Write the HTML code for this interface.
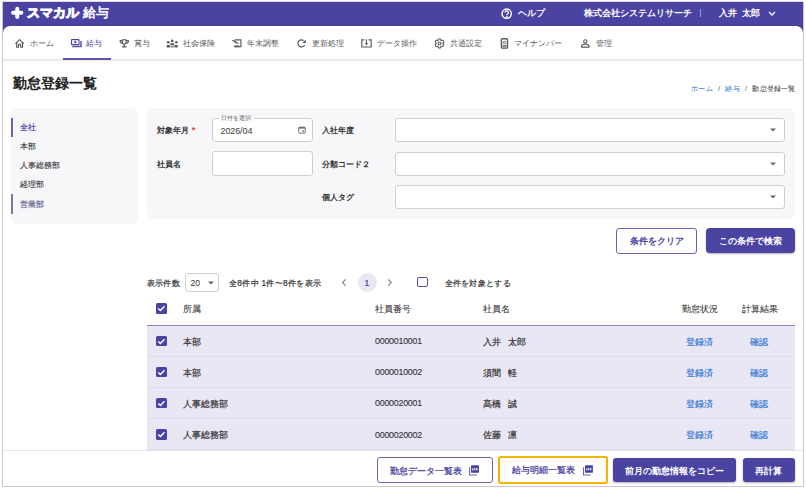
<!DOCTYPE html>
<html lang="ja">
<head>
<meta charset="utf-8">
<style>
*{box-sizing:border-box;margin:0;padding:0}
html,body{width:806px;height:489px;overflow:hidden;background:#fff}
body{font-family:"Liberation Sans",sans-serif;color:#333;position:relative;-webkit-text-stroke-width:.2px}
.a{position:absolute;white-space:nowrap;line-height:1}
#wrap{position:absolute;left:0;top:0;width:806px;height:489px;clip-path:inset(2px 3px 3px 3px)}
#frame{position:absolute;left:2px;top:1px;width:802px;height:486px;border:1px solid #c9c9c9;border-top-color:#dedcd6}
#hdr{position:absolute;left:3px;top:2px;width:800px;height:34px;background:#4a43a2}
#main{position:absolute;left:3px;top:26px;width:800px;height:470px;background:#fff;border-radius:7px 7px 0 0}
.w{color:#fff;font-weight:bold;-webkit-text-stroke-width:0}
.nav{font-size:8.4px;color:#5a5a5a;-webkit-text-stroke-width:0}
.navact{color:#4a43a2}
svg{position:absolute;overflow:visible}
.panel{position:absolute;background:#f7f7fa;border-radius:7px}
.lbl{font-size:8.25px;font-weight:bold;color:#333;-webkit-text-stroke-width:0}
.inp{position:absolute;background:#fff;border:1px solid #cfcfcf;border-radius:3px}
.btn{position:absolute;border-radius:3px;font-weight:bold;font-size:9px;text-align:center;-webkit-text-stroke-width:0}
.tx{font-size:8.6px;color:#333}
.row{position:absolute;left:144px;width:648px;height:31px;background:#e9e7f4;border-bottom:1px solid #dfdde9}
.cb{position:absolute;width:10.6px;height:10.6px;background:#4a43a2;border-radius:1.5px}
.link{color:#3c7dd6;font-size:8.6px}
</style>
</head>
<body>
<div id="wrap">
  <div id="hdr"></div>
  <div id="main"></div>
  <!-- logo -->
  <svg style="left:0;top:0" width="30" height="26" viewBox="0 0 30 26"><path d="M17.25 8.7V16.9M13.1 12.8H21.4" stroke="#fff" stroke-width="4" stroke-linecap="round"/></svg>
  <div class="a w" style="left:26.5px;top:6.8px;font-size:12.6px;font-weight:900;letter-spacing:.3px;-webkit-text-stroke:1px #fff">スマカル</div>
  <div class="a w" style="left:82.5px;top:7px;font-size:12.5px;font-weight:normal;-webkit-text-stroke:.55px #fff">給与</div>
  <!-- header right -->
  <svg style="left:501px;top:7.5px" width="12" height="12" viewBox="0 0 12 12"><circle cx="5.7" cy="5.7" r="4.6" fill="none" stroke="#fff" stroke-width="1.5"/><path d="M4.1 4.6a1.65 1.65 0 1 1 2.5 1.4c-.65.4-.9.7-.9 1.3" fill="none" stroke="#fff" stroke-width="1.3"/><circle cx="5.7" cy="8.6" r=".8" fill="#fff"/></svg>
  <div class="a w" style="left:518px;top:9px;font-size:8.5px">ヘルプ</div>
  <div class="a w" style="left:584px;top:9px;font-size:8.9px">株式会社システムリサーチ</div>
  <div class="a" style="left:700px;top:9px;width:1px;height:8px;background:#9f9acb"></div>
  <div class="a w" style="left:719px;top:9px;font-size:8.9px">入井&nbsp;&nbsp;太郎</div>
  <svg style="left:768px;top:11px" width="8" height="5" viewBox="0 0 8 5"><path d="M1 1l3 3 3-3" fill="none" stroke="#fff" stroke-width="1.3"/></svg>

  <!-- nav -->
  <div class="a" style="left:3px;top:59px;width:800px;height:2px;background:#ebebeb"></div>
  <div class="a" style="left:63px;top:58px;width:48px;height:2px;background:#5e57b0"></div>
  <svg id="navicons" style="left:0;top:0" width="806" height="60" viewBox="0 0 806 60">
<g fill="none" stroke="#5a5a5a" stroke-width="1.15" stroke-linejoin="round" stroke-linecap="round">
<path d="M15.7 43.3L19.6 39.6 23.5 43.3"/>
<path d="M16.7 42.6V47.2H18.5V45.2A1.1 1.1 0 0 1 20.7 45.2V47.2H22.5V42.6"/>
</g>
<g>
<rect x="71.4" y="39.6" width="7.6" height="5" rx=".7" fill="none" stroke="#4a43a2" stroke-width="1.1"/>
<circle cx="75.2" cy="42.1" r="1.2" fill="#4a43a2"/>
<path d="M72.2 46.5H81V41" fill="none" stroke="#5a54b0" stroke-width="1.5"/>
</g>
<g fill="none" stroke="#5a5a5a" stroke-width="1.15">
<path d="M122.5 39.7H126V42.4A1.75 1.75 0 0 1 122.5 42.4Z"/>
<path d="M122.5 40.6H120.2V41.4A1.9 1.9 0 0 0 122.4 43.2M126 40.6H128.3V41.4A1.9 1.9 0 0 1 126.1 43.2"/>
<path d="M124.25 44.2V46.6M122 46.9H126.5" stroke-width="1.2"/>
</g>
<g fill="#5a5a5a">
<circle cx="172.2" cy="40.9" r="1.35"/>
<circle cx="168.2" cy="42.3" r="1.3"/>
<circle cx="176.3" cy="42.3" r="1.3"/>
<rect x="170.3" y="43.3" width="3.9" height="1.7" rx=".3"/>
<rect x="166.6" y="44.9" width="3.3" height="2.6" rx=".4"/>
<rect x="174.5" y="44.9" width="3.3" height="2.6" rx=".4"/>
<rect x="170.5" y="45.6" width="3.5" height="1.9" fill="#8a8a8a"/>
</g>
<g fill="none" stroke="#5a5a5a" stroke-width="1.15">
<path d="M234.8 39.9H240.9V46.6H234.6"/>
<path d="M232.3 40.6L234.2 40.9 238.4 43.9"/>
<path d="M234.4 41.4L236.1 43.4"/>
</g>
<rect x="234.2" y="45.4" width="4.8" height="1.8" fill="#5a5a5a"/>
<g fill="none" stroke="#5a5a5a" stroke-width="1.2">
<path d="M304.6 44.9A3.5 3.5 0 1 1 303.6 40.6"/>
</g>
<path d="M305.8 39.4V42.9H302.3Z" fill="#5a5a5a"/>
<g fill="none" stroke="#5a5a5a" stroke-width="1.15">
<path d="M364.3 39.8H361.8V47H371.2V39.8H368.6M366.45 39.3V44.2"/>
</g>
<path d="M364.7 43.2H368.2L366.45 45.2Z" fill="#5a5a5a"/>
<g fill="none" stroke="#5a5a5a" stroke-width="1.1" stroke-linejoin="round">
<path d="M441.05 40.72C441.42 38.14 437.58 38.14 437.95 40.72C435.90 39.11 433.99 42.43 436.40 43.40C433.99 44.37 435.90 47.69 437.95 46.08C437.58 48.66 441.42 48.66 441.05 46.08C443.10 47.69 445.01 44.37 442.60 43.40C445.01 42.43 443.10 39.11 441.05 40.72Z"/>
<circle cx="439.5" cy="43.4" r="1.4"/>
</g>
<g fill="none" stroke="#5a5a5a">
<rect x="501.4" y="38.7" width="6.1" height="9.4" rx=".9" stroke-width="1.4"/>
<circle cx="504.45" cy="42.5" r="1.15" stroke-width="1"/>
</g>
<rect x="502.3" y="44.9" width="4.3" height="2.4" fill="#8a8a8a"/>
<g fill="none" stroke="#5a5a5a" stroke-width="1.15">
<circle cx="585.3" cy="41.4" r="1.65"/>
<path d="M581.6 47.1V45.9C581.6 44.6 584 44.2 585.3 44.2S589 44.6 589 45.9V47.1Z"/>
</g>
</svg>
  <div class="a nav" style="left:30px;top:39.3px">ホーム</div>
  <div class="a nav navact" style="left:86px;top:39.3px">給与</div>
  <div class="a nav" style="left:134px;top:39.3px">賞与</div>
  <div class="a nav" style="left:183px;top:39.3px">社会保険</div>
  <div class="a nav" style="left:247px;top:39.3px">年末調整</div>
  <div class="a nav" style="left:312px;top:39.3px">更新処理</div>
  <div class="a nav" style="left:377px;top:39.3px">データ操作</div>
  <div class="a nav" style="left:450px;top:39.3px">共通設定</div>
  <div class="a nav" style="left:514px;top:39.3px">マイナンバー</div>
  <div class="a nav" style="left:596px;top:39.3px">管理</div>

  <!-- title -->
  <div class="a" style="left:13px;top:75.8px;font-size:14.4px;font-weight:bold;color:#222;-webkit-text-stroke-width:0">勤怠登録一覧</div>
  <div class="a" style="right:10.4px;top:84.8px;font-size:7.2px;letter-spacing:.2px;color:#3c7dd6;-webkit-text-stroke-width:.05px">ホーム<span style="color:#666;margin:0 5.2px">/</span>給与<span style="color:#666;margin:0 5.2px">/</span><span style="color:#444">勤怠登録一覧</span></div>

  <!-- side panel -->
  <div class="panel" style="left:11px;top:108px;width:126.5px;height:116px"></div>
  <div class="a" style="left:11px;top:118px;width:2px;height:19px;background:#6a62b8"></div>
  <div class="a" style="left:11px;top:194px;width:2px;height:20px;background:#7a75a8"></div>
  <div class="a tx" style="left:19.5px;top:123.6px;font-size:8px;color:#4a43a2">全社</div>
  <div class="a tx" style="left:19.5px;top:143.1px;font-size:8px;color:#333;-webkit-text-stroke-width:.1px">本部</div>
  <div class="a tx" style="left:19.5px;top:162.1px;font-size:8px;color:#333;-webkit-text-stroke-width:.1px">人事総務部</div>
  <div class="a tx" style="left:19.5px;top:181.1px;font-size:8px;color:#333;-webkit-text-stroke-width:.1px">経理部</div>
  <div class="a tx" style="left:19.5px;top:200.6px;font-size:8px;color:#6b6690">営業部</div>

  <!-- filter panel -->
  <div class="panel" style="left:146.6px;top:108px;width:648px;height:110.5px"></div>
  <div class="a lbl" style="left:156.5px;top:125.8px">対象年月 <span style="color:#e53935;font-size:9px;margin-left:1px">*</span></div>
  <div class="a lbl" style="left:156.5px;top:160.8px">社員名</div>
  <div class="inp" style="left:212px;top:118px;width:101px;height:24px"></div>
  <div class="a" style="left:218.8px;top:114.5px;padding:0 2.5px;background:linear-gradient(#f7f7fa 50%,#fff 50%);font-size:6.4px;color:#555;-webkit-text-stroke-width:0">日付を選択</div>
  <div class="a" style="left:220.5px;top:126.6px;font-size:9px;letter-spacing:-.1px;color:#3a3a3a;-webkit-text-stroke-width:0">2026/04</div>
  <svg style="left:298px;top:126px" width="8" height="8" viewBox="0 0 8 8"><rect x=".8" y="1.2" width="6.4" height="6" rx=".6" fill="none" stroke="#666" stroke-width=".9"/><rect x=".8" y="1.2" width="6.4" height="1.4" fill="#666"/><rect x="4.2" y="4.3" width="1.6" height="1.6" fill="#666"/></svg>
  <div class="inp" style="left:212px;top:151px;width:101px;height:25px"></div>
  <div class="a lbl" style="left:322px;top:127px">入社年度</div>
  <div class="a lbl" style="left:322px;top:160.5px">分類コード２</div>
  <div class="a lbl" style="left:322px;top:194px">個人タグ</div>
  <div class="inp" style="left:395px;top:118px;width:390px;height:24px"></div>
  <div class="inp" style="left:395px;top:152px;width:390px;height:24px"></div>
  <div class="inp" style="left:395px;top:185px;width:390px;height:24px"></div>
  <svg style="left:770px;top:128px" width="6" height="4" viewBox="0 0 6 4"><path d="M0 .5h6L3 3.5z" fill="#666"/></svg>
  <svg style="left:770px;top:162px" width="6" height="4" viewBox="0 0 6 4"><path d="M0 .5h6L3 3.5z" fill="#666"/></svg>
  <svg style="left:770px;top:195px" width="6" height="4" viewBox="0 0 6 4"><path d="M0 .5h6L3 3.5z" fill="#666"/></svg>

  <!-- search buttons -->
  <div class="btn" style="left:616px;top:228px;width:81px;height:26px;border:1px solid #6b65b8;color:#4a43a2;background:#fff;padding-top:5.5px">条件をクリア</div>
  <div class="btn" style="left:706px;top:228.2px;width:88.5px;height:25.3px;border-radius:4px;background:#4a43a2;color:#fff;padding-top:6.6px;box-shadow:0 1px 2px rgba(0,0,0,.3)">この条件で検索</div>

  <!-- toolbar -->
  <div class="a tx" style="left:146.5px;top:279.2px;font-size:8.4px;letter-spacing:.4px">表示件数</div>
  <div class="inp" style="left:185px;top:273px;width:34px;height:19px"></div>
  <div class="a tx" style="left:190.5px;top:278.8px;font-size:8.6px;-webkit-text-stroke-width:0">20</div>
  <svg style="left:208px;top:281px" width="6" height="4" viewBox="0 0 6 4"><path d="M0 .5h6L3 3.5z" fill="#666"/></svg>
  <div class="a tx" style="left:229px;top:279.2px;font-size:8.4px;letter-spacing:.3px">全8件中 1件〜8件を表示</div>
  <svg style="left:341px;top:278px" width="6" height="10" viewBox="0 0 6 10"><path d="M4.6 1.3L1.6 4.6 4.6 7.9" fill="none" stroke="#888" stroke-width="1.25"/></svg>
  <div class="a" style="left:357.5px;top:272.5px;width:19.5px;height:19.5px;border-radius:50%;background:#e9e7f4"></div>
  <div class="a tx" style="left:364.5px;top:278.6px;color:#4a43a2">1</div>
  <svg style="left:387px;top:278px" width="6" height="10" viewBox="0 0 6 10"><path d="M1.2 1.3L4.2 4.6 1.2 7.9" fill="none" stroke="#888" stroke-width="1.25"/></svg>
  <div class="a" style="left:417.2px;top:276.9px;width:10.8px;height:10.6px;border:1.6px solid #5650b0;border-radius:2px"></div>
  <div class="a tx" style="left:444.5px;top:279.2px;font-size:8.4px;letter-spacing:.3px">全件を対象とする</div>

  <!-- table -->
  <div class="cb" style="left:156.4px;top:303px"><svg style="left:0;top:0" width="11" height="11" viewBox="0 0 11 11"><path d="M2.2 5.4l2.2 2.2 4.1-4.3" fill="none" stroke="#fff" stroke-width="1.4"/></svg></div>
  <div class="a tx" style="left:183px;top:305.2px;color:#3a3a3a;-webkit-text-stroke-width:.1px">所属</div>
  <div class="a tx" style="left:375px;top:305.2px;color:#3a3a3a;-webkit-text-stroke-width:.1px">社員番号</div>
  <div class="a tx" style="left:483px;top:305.2px;color:#3a3a3a;-webkit-text-stroke-width:.1px">社員名</div>
  <div class="a tx" style="left:682px;top:305.2px;color:#3a3a3a;-webkit-text-stroke-width:.1px">勤怠状況</div>
  <div class="a tx" style="left:742px;top:305.2px;color:#3a3a3a;-webkit-text-stroke-width:.1px">計算結果</div>
  <div class="a" style="left:147px;top:325px;width:648px;height:1px;background:#8a84c8"></div>

  <div class="row" style="left:147px;top:326px"></div>
  <div class="row" style="left:147px;top:357px"></div>
  <div class="row" style="left:147px;top:388px"></div>
  <div class="row" style="left:147px;top:419px"></div>

  <div class="cb" style="left:156.4px;top:335.5px"><svg style="left:0;top:0" width="11" height="11" viewBox="0 0 11 11"><path d="M2.2 5.4l2.2 2.2 4.1-4.3" fill="none" stroke="#fff" stroke-width="1.4"/></svg></div>
  <div class="a tx" style="left:183px;top:337.7px">本部</div>
  <div class="a tx" style="left:375px;top:337.3px;font-size:8.8px;letter-spacing:-.2px;-webkit-text-stroke-width:.12px">0000010001</div>
  <div class="a tx" style="left:483px;top:337.7px">入井&nbsp;&nbsp;&nbsp;太郎</div>
  <div class="a link" style="left:686px;top:337.7px">登録済</div>
  <div class="a link" style="left:750px;top:337.7px">確認</div>

  <div class="cb" style="left:156.4px;top:366.5px"><svg style="left:0;top:0" width="11" height="11" viewBox="0 0 11 11"><path d="M2.2 5.4l2.2 2.2 4.1-4.3" fill="none" stroke="#fff" stroke-width="1.4"/></svg></div>
  <div class="a tx" style="left:183px;top:368.7px">本部</div>
  <div class="a tx" style="left:375px;top:368.3px;font-size:8.8px;letter-spacing:-.2px;-webkit-text-stroke-width:.12px">0000010002</div>
  <div class="a tx" style="left:483px;top:368.7px">須間&nbsp;&nbsp;&nbsp;軽</div>
  <div class="a link" style="left:686px;top:368.7px">登録済</div>
  <div class="a link" style="left:750px;top:368.7px">確認</div>

  <div class="cb" style="left:156.4px;top:397.5px"><svg style="left:0;top:0" width="11" height="11" viewBox="0 0 11 11"><path d="M2.2 5.4l2.2 2.2 4.1-4.3" fill="none" stroke="#fff" stroke-width="1.4"/></svg></div>
  <div class="a tx" style="left:183px;top:399.7px">人事総務部</div>
  <div class="a tx" style="left:375px;top:399.3px;font-size:8.8px;letter-spacing:-.2px;-webkit-text-stroke-width:.12px">0000020001</div>
  <div class="a tx" style="left:483px;top:399.7px">髙橋&nbsp;&nbsp;&nbsp;誠</div>
  <div class="a link" style="left:686px;top:399.7px">登録済</div>
  <div class="a link" style="left:750px;top:399.7px">確認</div>

  <div class="cb" style="left:156.4px;top:429px"><svg style="left:0;top:0" width="11" height="11" viewBox="0 0 11 11"><path d="M2.2 5.4l2.2 2.2 4.1-4.3" fill="none" stroke="#fff" stroke-width="1.4"/></svg></div>
  <div class="a tx" style="left:183px;top:431.2px">人事総務部</div>
  <div class="a tx" style="left:375px;top:430.8px;font-size:8.8px;letter-spacing:-.2px;-webkit-text-stroke-width:.12px">0000020002</div>
  <div class="a tx" style="left:483px;top:431.2px">佐藤&nbsp;&nbsp;&nbsp;凛</div>
  <div class="a link" style="left:686px;top:431.2px">登録済</div>
  <div class="a link" style="left:750px;top:431.2px">確認</div>

  <!-- bottom bar -->
  <div class="a" style="left:3px;top:450px;width:800px;height:40px;background:#fff;border-top:1px solid #e6e6e6"></div>
  <div class="btn" style="left:376.5px;top:457px;width:116.5px;height:26px;border:1px solid #6a64b4;color:#4a43a2;background:#fff;font-weight:normal;-webkit-text-stroke-width:.25px;padding:6.5px 0 0 12.3px;text-align:left">勤怠データ一覧表</div>
  <svg style="left:468px;top:465px" width="12" height="11" viewBox="0 0 12 11"><rect x="3" y=".3" width="7.9" height="7.4" rx=".5" fill="#4a43a2"/><path d="M1.5 2.3V10H8.8" fill="none" stroke="#6a64b8" stroke-width="1.1"/><g fill="#fff" opacity=".85"><rect x="4.2" y="3.1" width="1.1" height="2.4"/><rect x="5.9" y="3.1" width="1.5" height="2"/><rect x="8" y="3.1" width="1.4" height="2.2"/></g></svg>
  <div class="btn" style="left:498px;top:456px;width:109.5px;height:27.5px;border:2px solid #f5b400;color:#4a43a2;background:#fff;font-weight:normal;-webkit-text-stroke-width:.25px;padding:6px 0 0 12.3px;text-align:left">給与明細一覧表</div>
  <svg style="left:581.5px;top:465px" width="12" height="11" viewBox="0 0 12 11"><rect x="3" y=".3" width="7.9" height="7.4" rx=".5" fill="#4a43a2"/><path d="M1.5 2.3V10H8.8" fill="none" stroke="#6a64b8" stroke-width="1.1"/><g fill="#fff" opacity=".85"><rect x="4.2" y="3.1" width="1.1" height="2.4"/><rect x="5.9" y="3.1" width="1.5" height="2"/><rect x="8" y="3.1" width="1.4" height="2.2"/></g></svg>
  <div class="btn" style="left:612.5px;top:458px;width:123.5px;height:24px;background:#4a43a2;color:#fff;padding-top:6.5px;box-shadow:0 1px 2px rgba(0,0,0,.3)">前月の勤怠情報をコピー</div>
  <div class="btn" style="left:742.5px;top:458px;width:52px;height:24px;background:#4a43a2;color:#fff;padding-top:6.5px;box-shadow:0 1px 2px rgba(0,0,0,.3)">再計算</div>

</div>
<div id="frame"></div>
</body>
</html>
